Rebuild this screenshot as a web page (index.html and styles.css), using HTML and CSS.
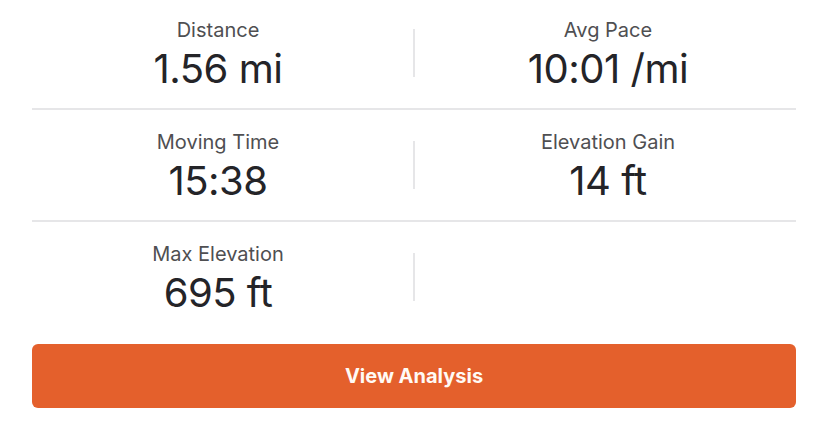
FILE: index.html
```html
<!DOCTYPE html>
<html lang="en">
<head>
    <meta charset="UTF-8">
    <meta name="viewport" content="width=device-width, initial-scale=1.0">
    <title>Activity Stats</title>
    <link rel="stylesheet" href="styles.css">
</head>
<body>
    <main class="stats">
        <div class="stats-row">
            <div class="stat stat-left">
                <span class="stat-label">Distance</span>
                <span class="stat-value">1.56 mi</span>
            </div>
            <div class="stat-divider"></div>
            <div class="stat stat-right">
                <span class="stat-label">Avg Pace</span>
                <span class="stat-value">10:01 /mi</span>
            </div>
        </div>
        <div class="stats-row">
            <div class="stat stat-left">
                <span class="stat-label">Moving Time</span>
                <span class="stat-value">15:38</span>
            </div>
            <div class="stat-divider"></div>
            <div class="stat stat-right">
                <span class="stat-label">Elevation Gain</span>
                <span class="stat-value">14 ft</span>
            </div>
        </div>
        <div class="stats-row last">
            <div class="stat stat-left">
                <span class="stat-label">Max Elevation</span>
                <span class="stat-value">695 ft</span>
            </div>
            <div class="stat-divider"></div>
            <div class="stat stat-right"></div>
        </div>
        <button type="button" class="analysis-button">View Analysis</button>
    </main>
</body>
</html>
```

FILE: styles.css
```css
:root {
    --accent: #e4602c;
    --label-color: #4f4f52;
    --value-color: #242428;
    --line-color: #e6e6e8;
}

body {
    margin: 0;
    background-color: #ffffff;
    font-family: 'Inter', 'Liberation Sans', sans-serif;
}

.stats {
    margin: -2px 32px 0;
}

.stats-row {
    display: grid;
    grid-template-columns: 1fr 2px 1fr;
    height: 110px;
    border-bottom: 2px solid var(--line-color);
}

.stats-row.last {
    border-bottom: none;
}

.stat {
    display: flex;
    flex-direction: column;
    align-items: center;
    padding-top: 20px;
}

.stat-left {
    padding-right: 9px;
}

.stat-right {
    padding-left: 5px;
}

.stat-label {
    font-size: 20px;
    line-height: 24px;
    color: var(--label-color);
}

.stat-value {
    margin-top: 3px;
    font-size: 40px;
    line-height: 48px;
    letter-spacing: -0.5px;
    color: var(--value-color);
}

.stat-divider {
    align-self: center;
    height: 48px;
    background-color: var(--line-color);
}

.analysis-button {
    display: block;
    width: 100%;
    height: 64px;
    margin-top: 12px;
    border: none;
    border-radius: 6px;
    background-color: var(--accent);
    color: #fffaf5;
    font-family: inherit;
    font-size: 20px;
    font-weight: 700;
    cursor: pointer;
}
```
